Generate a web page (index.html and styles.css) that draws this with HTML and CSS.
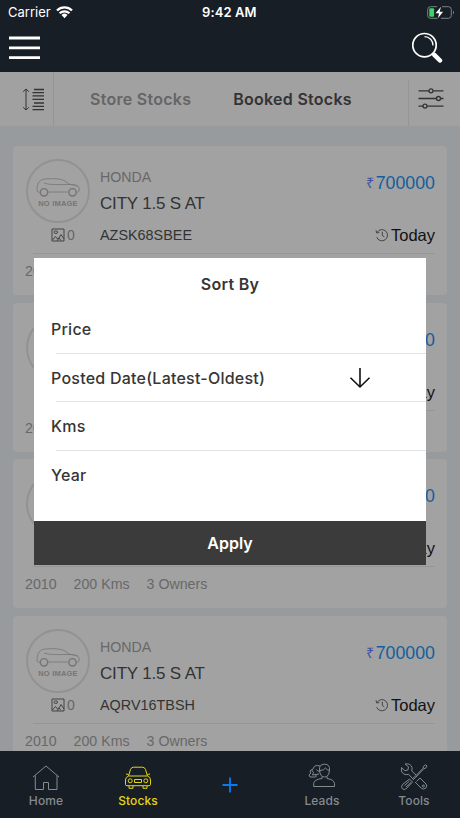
FILE: index.html
```html
<!DOCTYPE html>
<html lang="en">
  <head>
    <meta charset="UTF-8" />
    <meta name="viewport" content="width=device-width, initial-scale=1.0" />
    <title>Stocks</title>
    <link rel="stylesheet" href="styles.css">
  </head>

  <body>
    <!-- shared icons -->
    <svg class="sprite" aria-hidden="true">
      <symbol id="no-image" viewBox="0 0 44 20">
        <path class="body" d="M3.500 15.300C1 15.300 .8 14 1.200 10.500C1.500 6 4 2.500 9 2C17 1.400 24 1.600 28 3.500L33.500 7.300C39 8 43 9 43.200 11.500C43.500 14 42.500 15.300 40.500 15.300M12.500 15H31.500M8 6C14 8.200 24 7.500 34 7.500C37 7.500 40 8 42 9.300" />
        <circle cx="8" cy="15.300" r="3.700" class="wheel" />
        <circle cx="36.500" cy="15.300" r="3.700" class="wheel" />
      </symbol>
      <symbol id="photo" viewBox="0 0 14 14">
        <path d="M1 1H13V13H1ZM1.500 12L4.500 8.500L6.500 11L8 10L10 6.500L13 11M6 13L8 10L10 12.500" />
        <ellipse cx="4.800" cy="4.200" rx="1.800" ry="1.300" />
      </symbol>
      <symbol id="history" viewBox="0 0 14 14">
        <path d="M2.200 4.200A5.600 5.600 0 1 1 1.700 9.200M1 2.300L1.700 5L4.300 4.500M7.300 3.700V7.500L9.300 8.800" />
      </symbol>
    </svg>

    <header>
      <div class="status">
        <span class="carrier">Carrier</span>
        <svg class="wifi" width="17" height="13" viewBox="0 0 17 13">
          <path d="M1 4.500A10.600 10.600 0 0 1 16 4.500M3.600 7.300A7 7 0 0 1 13.400 7.300" />
          <path class="dot" d="M5.500 9A4.300 4.300 0 0 1 11.500 9L8.500 12.200Z" />
        </svg>
        <span class="time">9:42 AM</span>
        <svg class="battery" width="28" height="13" viewBox="0 0 28 13">
          <path d="M10 .7H3.500Q.7.700.7 3.500V9.500Q.7 12.300 3.500 12.300H10.500M15 .7H21.500Q24.300.7 24.300 3.500V9.500Q24.300 12.300 21.500 12.300H14" />
          <path class="tip" d="M26 4.500Q28 6.500 26 8.500Z" />
          <rect x="2.300" y="2.300" width="4.800" height="8.400" rx="1" />
          <path class="bolt" d="M14 .8L8.500 7.300H12L11 12.200L16 5.700H12.600Z" />
        </svg>
      </div>
      <div class="bar">
        <svg class="menu" width="31" height="24" viewBox="0 0 31 24">
          <path d="M0 2H31M0 11.800H31M0 21.700H31" />
        </svg>
        <svg class="search" width="32" height="32" viewBox="0 0 32 32">
          <circle cx="13.500" cy="13.200" r="11.700" />
          <path class="shine" d="M13.500 4.700A8.500 8.500 0 0 1 22 13.500" />
          <path d="M21.500 21.500L23 23" />
          <path class="handle" d="M23.300 22.800L29 28.500" />
        </svg>
      </div>
    </header>

    <nav class="filters">
      <button class="sort">
        <svg width="22" height="23" viewBox="0 0 22 23">
          <path class="arrow" d="M4 1V22M1.200 3.700L4 1L6.800 3.700M1.200 19.300L4 22L6.800 19.300" />
          <path class="lines" d="M12 1.500H22M10.500 4.700H22M10.500 7.900H22M10.500 11.300H22M12 15H22M10.500 18.300H22M10.500 21.700H22" />
        </svg>
      </button>
      <div class="tabs">
        <a class="store">Store Stocks</a>
        <a class="booked valgt">Booked Stocks</a>
      </div>
      <button class="filter">
        <svg width="26" height="21" viewBox="0 0 26 21">
          <path d="M.5 2.800H11M15 2.800H25.500M.5 10.500H18.500M22.500 10.500H25.500M.5 18.100H5M9 18.100H25.500" />
          <circle cx="13" cy="2.800" r="2" />
          <circle cx="20.500" cy="10.500" r="2" />
          <circle cx="7" cy="18.100" r="2" />
        </svg>
      </button>
    </nav>

    <main></main>

    <template>
      <article>
        <div class="top">
          <div class="left">
            <div class="thumb">
              <svg width="44" height="20"><use href="#no-image" /></svg>
              <span>NO IMAGE</span>
            </div>
            <div class="count">
              <svg width="14" height="14"><use href="#photo" /></svg>
              <span>0</span>
            </div>
          </div>
          <div class="info">
            <p class="make">HONDA</p>
            <h2>CITY 1.5 S AT</h2>
            <p class="reg"></p>
          </div>
          <div class="right">
            <p class="price"><span>₹</span>700000</p>
            <p class="date"><svg width="14" height="14"><use href="#history" /></svg>Today</p>
          </div>
        </div>
        <div class="specs">
          <span>2010</span>
          <span>200 Kms</span>
          <span>3 Owners</span>
        </div>
      </article>
    </template>

    <section id="modal">
      <h3>Sort By</h3>
      <ul>
        <li>Price</li>
        <li>
          Posted Date(Latest-Oldest)
          <svg width="22" height="22" viewBox="0 0 22 22">
            <path d="M11 1V20M1.500 10.800L11 20L20.500 10.800" />
          </svg>
        </li>
        <li>Kms</li>
        <li>Year</li>
      </ul>
      <button class="apply">Apply</button>
    </section>

    <footer>
      <a>
        <svg width="28" height="28" viewBox="0 0 28 28">
          <path d="M1 14L14 3L27 14M3.300 12.500V26.500H11.500V19.500H16.500V26.500H25V12.500" />
        </svg>
        <span>Home</span>
      </a>
      <a class="active">
        <svg width="28" height="28" viewBox="0 0 28 28">
          <path d="M4.500 13L6.500 6.500Q7.300 4.200 9.500 4.200H18.500Q20.700 4.200 21.500 6.500L23.500 13M4.500 13H23.500Q26.500 14 26.500 17V21.500Q26.500 22.700 25 22.700H3Q1.500 22.700 1.500 21.500V17Q1.500 14 4.500 13ZM4.500 11.500L2 11M23.500 11.500L26 11M5 23V25.300H9V23M19 23V25.300H23V23M10.500 16.500H17.500V19.500H10.500Z" />
          <circle cx="6.200" cy="17.800" r="2" />
          <circle cx="21.800" cy="17.800" r="2" />
        </svg>
        <span>Stocks</span>
      </a>
      <a class="add">
        <svg width="16" height="16" viewBox="0 0 16 16"><path d="M8 .5V15.500M.5 8H15.500" /></svg>
      </a>
      <a>
        <svg width="28" height="28" viewBox="0 0 28 28">
          <path d="M11.500 7Q11 1.200 16.500 1.200Q22 1.200 21.500 7Q21 14 16.500 14Q12 14 11.500 7ZM11.800 7.500Q16 7.500 17.500 5Q19 7 21.300 7.500M14 13.500V15.500Q6 16.500 5.700 20.500V23.500H26.500V20.500Q26 16.500 19 15.500V13.500" />
          <path d="M12 3Q6.500 1.500 5.500 5L4 7.500L5.500 9.500L4.500 12L8 11.500V14M4 6.500L2 8L2.800 10L1 12L2 14H7.500M8.500 6.500Q9.500 8.500 11.500 8.500M8 11.500L11 11" />
        </svg>
        <span>Leads</span>
      </a>
      <a>
        <svg width="28" height="28" viewBox="0 0 28 28">
          <path d="M5 1Q10.500 0 12 4.500Q12.300 6 11.700 8L16 12M1.500 4.500Q.5 10 5 11.500Q7 12 8.500 11.200L12.500 15.500M1.500 4.500L5 7.800L8 6.800L8.500 3.800L5 1M16.500 18.500L20 15L26 21Q27.700 23.200 25.700 25.200Q23.500 27 21.300 25.200L15 19" />
          <path d="M14.500 14L23.200 5.200L23.500 3.300L25.700 1.700L27 3L25.500 5.300L23.800 5.700L15.300 14.800M9.500 16L12.500 19L6.500 25.500Q4 27.500 2.300 25.700Q.7 24 2.500 21.500L9.500 16ZM12 15.800L14.500 14M12.800 17L15.300 14.800M4.500 22.500L9.500 18M6 24L11 19.500" />
          <circle cx="23.400" cy="23" r="1" />
        </svg>
        <span>Tools</span>
      </a>
    </footer>

    <script>
      const main = document.querySelector("main");
      const temp = document.querySelector("template");
      const stocks = ["AZSK68SBEE", "AZSK68SBEE", "AZSK68SBEE", "AQRV16TBSH"];

      stocks.forEach((reg) => {
        let klon = temp.cloneNode(true).content;
        klon.querySelector(".reg").textContent = reg;
        main.appendChild(klon);
      });
    </script>
  </body>
</html>
```
FILE: styles.css
```css
* {
  box-sizing: border-box;
}

body {
  margin: 0;
  height: 818px;
  display: flex;
  flex-direction: column;
  position: relative;
  overflow: hidden;
  background-color: #989b9d;
  font-family: Inter, "Liberation Sans", sans-serif;
}

h2,
h3,
p,
ul {
  margin: 0;
  padding: 0;
  font-weight: 400;
}

svg {
  fill: none;
  stroke: currentColor;
  flex-shrink: 0;
  display: block;
}

.sprite {
  display: none;
}

button {
  border: 0;
  padding: 0;
  background: none;
  font-family: inherit;
}

/* header */
header {
  height: 72px;
  flex-shrink: 0;
  background-color: #171e26;
  color: white;
}

.status {
  height: 24px;
  display: flex;
  align-items: center;
  padding: 0 5px 0 8px;
  font-size: 13px;
}

.carrier {
  width: 48px;
}

.wifi {
  stroke-width: 2.3;
}

.wifi .dot {
  fill: white;
  stroke: none;
}

.time {
  font-weight: 600;
  letter-spacing: 0.1px;
  margin-left: 129px;
}

.battery {
  margin-left: auto;
  stroke: #7d8288;
}

.battery rect {
  fill: #3bd365;
  stroke: none;
}

.battery .bolt {
  fill: white;
  stroke: none;
}

.battery .tip {
  fill: #7d8288;
  stroke: none;
}

.bar {
  height: 47px;
  display: flex;
  justify-content: space-between;
  align-items: center;
  padding: 0 17px 0 9px;
}

.menu {
  stroke-width: 2.8;
}

.search {
  stroke-width: 1.7;
}

.search .shine {
  stroke-width: 1.3;
}

.search .handle {
  stroke-width: 4.5;
  stroke-linecap: round;
}

/* filters */
.filters {
  height: 55px;
  flex-shrink: 0;
  display: flex;
  background-color: #a1a1a1;
  border-bottom: 1px solid #999b9b;
  color: #333;
}

.filters button {
  width: 54px;
  display: flex;
  align-items: center;
  border-right: 1px solid #969696;
  padding-left: 22px;
  color: #333;
}

.filters .filter {
  width: 52px;
  margin-top: 8px;
  padding: 0 0 9px 9px;
  border-right: 0;
  border-left: 1px solid #969696;
}

.sort .lines {
  stroke-width: 1.3;
}

.filter svg {
  stroke-width: 1.3;
}

.tabs {
  flex: 1;
  display: flex;
  align-items: center;
  padding-left: 36px;
  gap: 42px;
  font-size: 16px;
  font-weight: 600;
  letter-spacing: 0.27px;
  color: #656565;
  white-space: nowrap;
}

.tabs .valgt {
  color: #333;
}

/* stock cards */
main {
  flex: 1;
  min-height: 0;
  overflow: hidden;
  padding: 19px 13px 0;
  display: flex;
  flex-direction: column;
  gap: 7.7px;
  font-family: "Liberation Sans", sans-serif;
}

article {
  height: 149px;
  flex-shrink: 0;
  padding: 13px 12px 0;
  border-radius: 4px;
  background-color: #a2a2a2;
}

.top {
  height: 94px;
  display: flex;
}

.left {
  width: 75px;
}

.thumb {
  width: 64px;
  height: 64px;
  margin-left: 1px;
  border: 2px solid #929292;
  border-radius: 50%;
  display: flex;
  flex-direction: column;
  align-items: center;
  padding-top: 16px;
  color: #757575;
}

.body {
  stroke-width: 0.8;
}

.wheel {
  stroke-width: 1.4;
}

.thumb span {
  font-size: 7.5px;
  font-weight: 700;
  line-height: 9px;
  letter-spacing: 0.2px;
  margin-top: 2px;
}

.count {
  display: flex;
  align-items: center;
  gap: 2px;
  margin: 3px 0 0 26px;
  font-size: 14px;
  line-height: 18px;
  color: #666;
}

.count svg {
  color: #444;
}

.info {
  flex: 1;
  color: #333;
}

.make {
  font-size: 14.2px;
  line-height: 18px;
  color: #686868;
  margin-top: 9px;
}

h2 {
  font-size: 17px;
  line-height: 22px;
  margin-top: 7px;
  letter-spacing: -0.18px;
}

.reg {
  font-size: 14.4px;
  line-height: 18px;
  margin-top: 11px;
}

.right {
  display: flex;
  flex-direction: column;
  align-items: flex-end;
}

.price {
  font-size: 17.8px;
  line-height: 22px;
  margin-top: 13px;
  color: #125f9e;
}

.price span {
  font-size: 14.5px;
  vertical-align: 1px;
  margin-right: 2px;
  color: #4251a0;
}

.date {
  display: flex;
  align-items: center;
  gap: 2px;
  margin-top: 31px;
  font-size: 16.5px;
  line-height: 20px;
  color: #111;
}

.date svg {
  color: #444;
}

.specs {
  display: flex;
  gap: 17px;
  margin-left: 8px;
  border-top: 1px solid #969696;
  padding-top: 8px;
  font-size: 14.2px;
  line-height: 18px;
  color: #686868;
}

.specs span:first-child {
  margin-left: -8px;
}

/* sort dialog */
#modal {
  position: absolute;
  left: 34px;
  top: 258px;
  width: 392px;
  height: 307px;
  background-color: white;
  color: #363636;
  display: flex;
  flex-direction: column;
}

h3 {
  height: 47px;
  padding-top: 3px;
  line-height: 46px;
  text-align: center;
  font-size: 16px;
  font-weight: 600;
  letter-spacing: 0.3px;
}

ul {
  flex: 1;
  list-style: none;
}

li {
  height: 48.6px;
  display: flex;
  align-items: center;
  justify-content: space-between;
  padding: 0 55px 0 17px;
  font-size: 16px;
  font-weight: 500;
  letter-spacing: 0.23px;
  background: linear-gradient(#e2e2e2, #e2e2e2) 22px 100% / 100% 1px no-repeat;
}

li:last-child {
  background: none;
}

li svg {
  color: #111;
  stroke-width: 1.6;
}

.apply {
  height: 44px;
  background-color: #3b3b3b;
  color: white;
  font-size: 16px;
  font-weight: 600;
}

/* bottom menu */
footer {
  height: 67px;
  flex-shrink: 0;
  display: grid;
  grid-template-columns: repeat(5, 1fr);
  background-color: #171e26;
  color: #858a8f;
  font-size: 12px;
  font-weight: 500;
}

footer a {
  display: flex;
  flex-direction: column;
  align-items: center;
  padding-top: 12px;
  gap: 2px;
  line-height: 16px;
}

footer span {
  letter-spacing: 0.1px;
}

footer .active {
  color: #e4d51a;
}

footer .add {
  color: #0a7cf0;
  justify-content: center;
  padding-top: 0;
}

footer .add svg {
  stroke-width: 1.8;
}
```
